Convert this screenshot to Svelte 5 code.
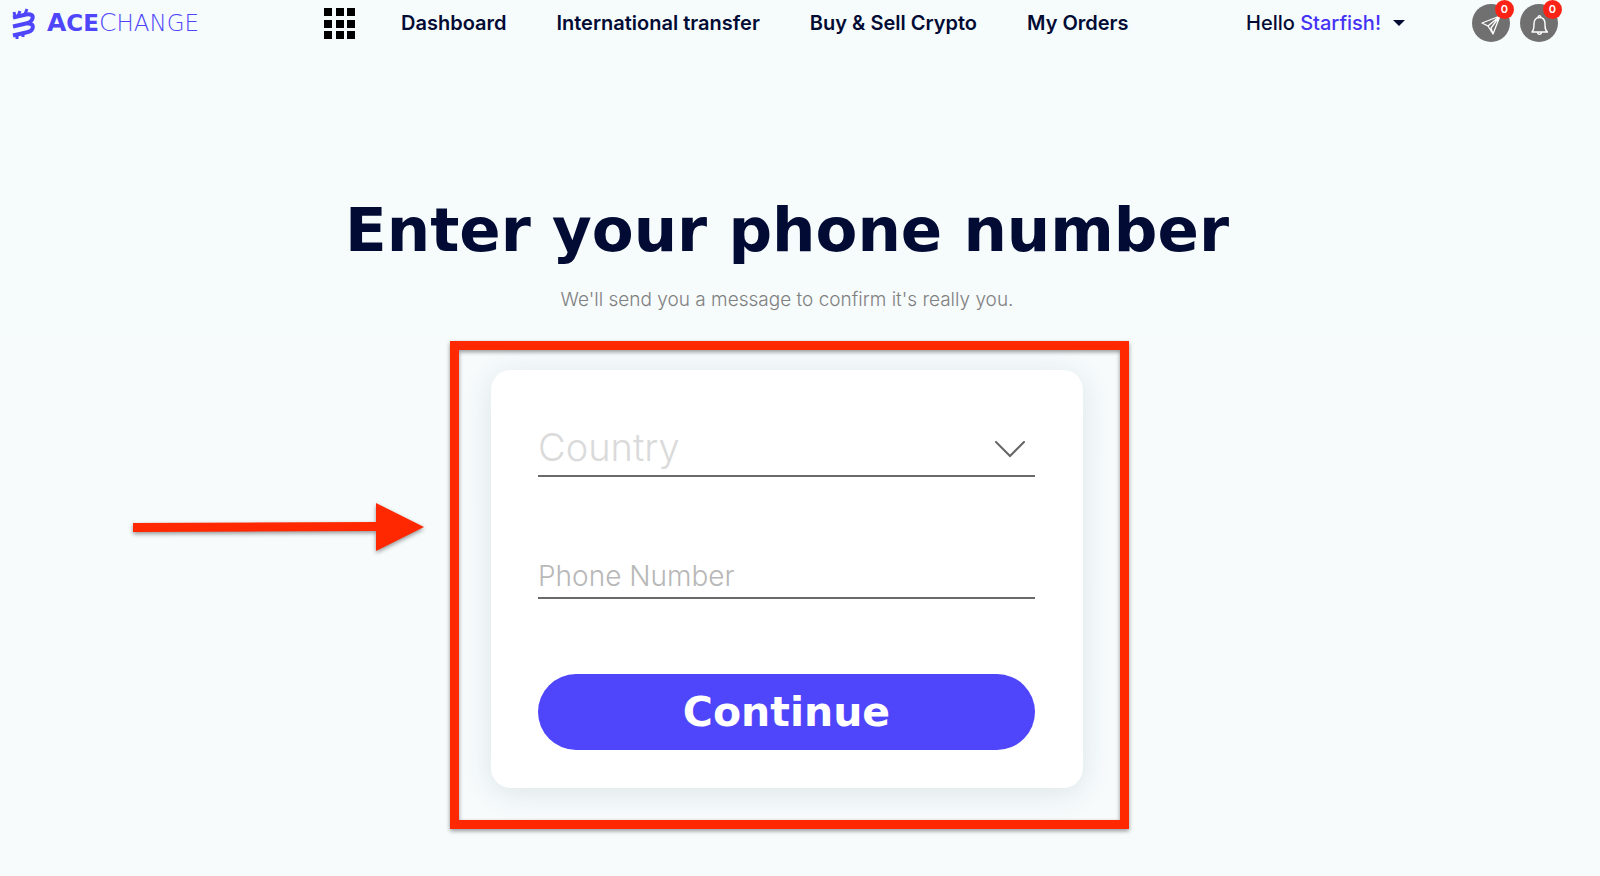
<script>
	let country = $state('');
	let phone = $state('');

	const links = ['Dashboard', 'International transfer', 'Buy & Sell Crypto', 'My Orders'];
	const countries = ['France', 'Germany', 'Spain', 'United Kingdom'];
	const dots = [0, 12, 23];
</script>

<div class="page">
	<header>
		<a class="brand" href="#home" aria-label="AceChange home">
			<svg width="24" height="32" viewBox="0 0 24 32" fill="none" stroke="#4f46fb">
				<path d="M1 10.500L14 7.500C19 6.500 21.500 8.500 20.500 11.500C19.500 15 17 16 14 16.500L1 19.500" stroke-width="4" />
				<path d="M15 16.500C20 16 21.500 18.500 20.500 21.500C19.500 24 17 25 14 25.500L1 28.500" stroke-width="4" />
				<path d="M8 4L6 9M15 2L13 7M3 9L2 5M5 27V32M11 26V30" stroke-width="3" />
			</svg>
			<span class="wordmark"><b>A<small>CE</small></b>C<small>HANGE</small></span>
		</a>
		<button class="apps" aria-label="Apps">
			<svg width="31" height="31" viewBox="0 0 31 31">
				{#each dots as y}
					{#each dots as x}
						<rect {x} {y} width="8" height="8" />
					{/each}
				{/each}
			</svg>
		</button>
		<nav>
			{#each links as link}
				<a href="#top">{link}</a>
			{/each}
		</nav>
		<button class="account">
			<span>Hello <em>Starfish!</em></span>
			<svg width="12" height="6" viewBox="0 0 12 6"><path d="M0 0H12L6 6Z" fill="#020b34" /></svg>
		</button>
		<div class="alerts">
			<button aria-label="Messages">
				<svg width="38" height="38" viewBox="0 0 38 38" fill="none" stroke="#fff" stroke-width="1.300" stroke-linejoin="round">
					<path d="M28 12L10 19L16 22L21 30ZM28 12L16 22M28 12L19 24L21 30" />
				</svg>
				<span class="badge">0</span>
			</button>
			<button aria-label="Notifications">
				<svg width="38" height="38" viewBox="0 0 38 38" fill="none" stroke="#fff" stroke-width="1.400" stroke-linejoin="round">
					<path d="M12 28C14 26 14 24 14 20C14 16 16 13.500 19.500 13.500C23 13.500 25 16 25 20C25 24 25 26 27.500 28ZM18 13.500C18 11 21 11 21 13.500M17.500 28.500C18 31 21 31 21.500 28.500" />
				</svg>
				<span class="badge">0</span>
			</button>
		</div>
	</header>

	<main>
		<h1>Enter your phone number</h1>
		<p>We'll send you a message to confirm it's really you.</p>

		<div class="stage">
			<form onsubmit={(e) => e.preventDefault()}>
				<div class="field country">
					<select aria-label="Country" bind:value={country} class:empty={!country}>
						<option value="" disabled hidden>Country</option>
						{#each countries as name}
							<option value={name}>{name}</option>
						{/each}
					</select>
					<svg class="chevron" width="32" height="18" viewBox="0 0 32 18" fill="none">
						<path d="M2 1L16 15L30 1" stroke="#666" stroke-width="2" stroke-linecap="round" />
					</svg>
				</div>
				<div class="field phone">
					<input type="tel" aria-label="Phone Number" placeholder="Phone Number" bind:value={phone} />
				</div>
				<button class="continue">Continue</button>
			</form>
			<div class="frame"></div>
			<svg class="arrow" width="292" height="50" viewBox="0 0 292 50">
				<path d="M0 20L243 19V0L291 24L243 48V28L0 29Z" fill="#ff2800" />
			</svg>
		</div>
	</main>
</div>

<style>
	:global(body) {
		margin: 0;
	}

	.page {
		min-height: 100vh;
		background: linear-gradient(#f6fbfc, #f7fbfc);
		color: #020b34;
		font-family: Inter, sans-serif;
	}

	button {
		border: none;
		padding: 0;
		background: none;
		color: inherit;
		font: inherit;
		cursor: pointer;
	}

	a {
		color: inherit;
		text-decoration: none;
	}

	svg {
		display: block;
	}

	/* Header */
	header {
		display: flex;
		align-items: center;
		height: 46px;
		padding: 0 42px 0 12px;
		font-size: 20px;
		line-height: 24px;
		font-weight: 500;
		white-space: nowrap;
	}

	.brand {
		display: flex;
		align-items: center;
		gap: 11px;
		width: 312px;
		color: #4f46fb;
	}

	.wordmark {
		font-family: 'DejaVu Sans', sans-serif;
		font-size: 25px;
		font-weight: 200;
	}

	.wordmark b {
		font-weight: 700;
	}

	.wordmark small {
		font-size: 23px;
	}

	nav {
		display: flex;
		gap: 50px;
		margin-left: 46px;
		font-weight: 600;
	}

	.account {
		display: flex;
		align-items: center;
		gap: 12px;
		margin-left: auto;
	}

	.account em {
		font-style: normal;
		color: #4432f5;
	}

	.alerts {
		display: flex;
		gap: 10px;
		margin-left: 67px;
	}

	.alerts button {
		position: relative;
		border-radius: 50%;
		background: #707070;
	}

	.badge {
		position: absolute;
		top: -4px;
		right: -4px;
		width: 19px;
		height: 19px;
		border-radius: 50%;
		background: #fb2316;
		color: #fff;
		font-size: 11px;
		line-height: 19px;
		font-weight: 600;
	}

	/* Content */
	main {
		display: flex;
		flex-direction: column;
		align-items: center;
		padding: 148px 26px 88px 0;
	}

	h1 {
		margin: 0;
		font-family: 'DejaVu Sans', sans-serif;
		font-size: 61px;
		line-height: 72px;
		font-weight: 700;
	}

	p {
		margin: 22px 0 58px;
		color: #808080;
		font-size: 19px;
		line-height: 24px;
		font-weight: 300;
	}

	.stage {
		position: relative;
		width: 592px;
	}

	form {
		display: flex;
		flex-direction: column;
		gap: 75px;
		padding: 46px 48px 38px 47px;
		border-radius: 20px;
		background: #fff;
		box-shadow: 0 5px 30px rgba(30, 70, 80, 0.12);
	}

	.field {
		position: relative;
		box-sizing: border-box;
		border-bottom: 2px solid #6a6a6a;
	}

	.country {
		height: 61px;
	}

	.phone {
		height: 47px;
	}

	select,
	input {
		appearance: none;
		box-sizing: border-box;
		width: 100%;
		height: 100%;
		padding: 3px 0 0;
		border: none;
		outline: none;
		background: none;
		color: #666;
		font-family: inherit;
		font-weight: 300;
	}

	select {
		font-size: 38px;
	}

	select.empty {
		color: #dadada;
	}

	input {
		font-size: 28px;
	}

	input::placeholder {
		color: #b8b8b8;
	}

	.chevron {
		position: absolute;
		top: 25px;
		right: 9px;
		pointer-events: none;
	}

	.continue {
		height: 76px;
		border-radius: 38px;
		background: #4f46fb;
		color: #fff;
		font-family: 'DejaVu Sans', sans-serif;
		font-size: 41px;
		font-weight: 700;
	}

	/* Callouts drawn over the form */
	.frame {
		position: absolute;
		inset: -29px -46px -41px -41px;
		border: 9px solid #ff2800;
		filter: drop-shadow(0 2px 2px rgba(0, 0, 0, 0.4));
		pointer-events: none;
	}

	.arrow {
		position: absolute;
		top: 133px;
		left: -358px;
		overflow: visible;
		filter: drop-shadow(0 2px 2px rgba(0, 0, 0, 0.4));
	}
</style>
